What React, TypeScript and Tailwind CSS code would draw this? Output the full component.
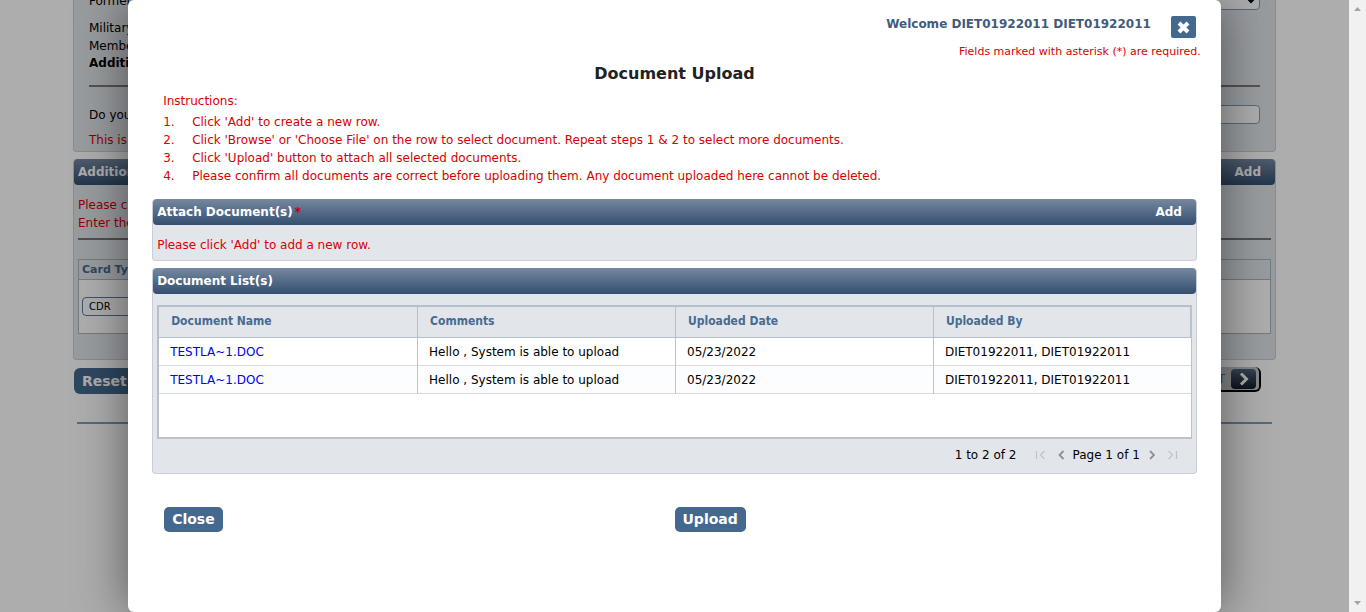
import type { ReactNode } from "react";

const documents = [
  { id: 1, name: "TESTLA~1.DOC", comments: "Hello , System is able to upload", date: "05/23/2022", by: "DIET01922011, DIET01922011" },
  { id: 2, name: "TESTLA~1.DOC", comments: "Hello , System is able to upload", date: "05/23/2022", by: "DIET01922011, DIET01922011" },
];

const instructions = [
  "Click 'Add' to create a new row.",
  "Click 'Browse' or 'Choose File' on the row to select document. Repeat steps 1 & 2 to select more documents.",
  "Click 'Upload' button to attach all selected documents.",
  "Please confirm all documents are correct before uploading them. Any document uploaded here cannot be deleted.",
];

function Panel({ title, action, children }: { title: ReactNode; action?: boolean; children: ReactNode }) {
  return (
    <section className="rounded-[4px] border border-t-0 border-[#c9cdd8] bg-[#e2e6eb]">
      <div className="flex h-[26px] items-center justify-between rounded-[4px] bg-linear-to-b from-[#75889f] to-[#354f70] pr-[14px] pl-1 text-[12px] font-bold text-white">
        <h2>{title}</h2>
        {action && <button type="button">Add</button>}
      </div>
      {children}
    </section>
  );
}

function PagerIcon({ label, d, faint }: { label: string; d: string; faint?: boolean }) {
  return (
    <button type="button" aria-label={label} className={faint ? "text-[#bfc3c8]" : "text-[#8b9197]"}>
      <svg width="12" height="12" viewBox="0 0 12 12" fill="none" stroke="currentColor" strokeWidth={faint ? 1.2 : 1.8}>
        <path d={d} />
      </svg>
    </button>
  );
}

function Page() {
  return (
    <main className="mx-[73px] text-[12px] leading-[18px]">
      <section className="h-[152px] rounded-b-[4px] border border-t-0 border-[#c9cdd8] bg-[#e2e6eb] px-[15px]">
        <div className="flex h-[10px] items-end justify-between">
          <label htmlFor="former">Former</label>
          <select id="former" className="h-[20px] w-[200px] rounded-[4px] border border-[#7f9db9] bg-white" />
        </div>
        <p className="mt-[9px]">Military</p>
        <p>Member</p>
        <h3 className="leading-[16px] font-bold">Additional</h3>
        <hr className="mt-[14px] border-t-2 border-[#7b7b7b]" />
        <div className="mt-[18px] flex items-center justify-between">
          <label htmlFor="question">Do you</label>
          <input id="question" className="h-[19px] w-[200px] rounded-[4px] border border-[#7f9db9] bg-white" />
        </div>
        <p className="mt-[7px] text-[#d80000]">This is</p>
      </section>

      <div className="mt-[7px]">
        <Panel title="Additional" action>
          <div className="h-[174px] px-1 pt-[11px]">
            <p className="text-[#d80000]">Please click</p>
            <p className="text-[#d80000]">Enter the</p>
            <hr className="mt-[6px] border-t-2 border-[#7b7378]" />
            <table className="mt-[19px] w-full border border-[#aab4bf]">
              <thead>
                <tr className="h-[20px] border-b border-[#aab4bf]">
                  <th className="pl-[3px] text-left text-[11px] text-[#466b92]">Card Type</th>
                </tr>
              </thead>
              <tbody>
                <tr className="h-[54px] bg-white">
                  <td className="pl-[3px]">
                    <select aria-label="Card Type" className="block h-[19px] w-[120px] appearance-none rounded-[4px] border border-[#5b7d9e] bg-white px-[6px] text-[10px] leading-[16px]">
                      <option>CDR</option>
                    </select>
                  </td>
                </tr>
              </tbody>
            </table>
          </div>
        </Panel>
      </div>

      <div className="mt-[8px] flex items-start justify-between pr-[15px] pl-px">
        <button type="button" className="h-[26px] rounded-[6px] bg-[#44698e] px-2 text-[14px] font-bold text-white">Reset</button>
        <button type="button" className="-mt-px flex h-[25px] items-center gap-[6px] rounded-[6px] border-r-2 border-b-2 border-black bg-[#c3c6cb] pr-[3px] pl-2 text-[#44698e]">
          NEXT
          <span className="flex h-[20px] w-[25px] items-center justify-center rounded-[4px] bg-linear-to-b from-[#52667f] to-[#131c28]">
            <svg width="12" height="14" viewBox="0 0 12 14" fill="none" stroke="#fff" strokeWidth="3"><path d="M3 1.5 8.5 7 3 12.5" /></svg>
          </span>
        </button>
      </div>
      <hr className="mx-1 mt-[28px] border-t-2 border-[#7d9db8]" />
    </main>
  );
}

function DocumentUpload() {
  return (
    <div role="dialog" aria-labelledby="dialog-title" className="flex min-h-full w-[81%] flex-col rounded-[6px] bg-white px-6 shadow-[0_0_50px_rgba(0,0,0,0.5)]">
      <header className="flex items-start justify-end pt-[15px] pr-px">
        <p className="mr-[20px] text-[12px] leading-[18px] font-bold text-[#3f5b7d]">Welcome DIET01922011 DIET01922011</p>
        <button type="button" aria-label="Close dialog" className="mt-px flex h-[22px] w-[25px] items-center justify-center rounded-[2px] bg-[#44698e]">
          <svg width="13" height="13" viewBox="0 0 13 13" stroke="#fff" strokeWidth="4"><path d="M2 2l9 9M11 2l-9 9" /></svg>
        </button>
      </header>
      <p className="-mr-1 mt-[5px] text-right text-[11px] leading-[18px] text-[#d80000]">Fields marked with asterisk (*) are required.</p>
      <h1 id="dialog-title" className="mt-[3px] text-center text-[16px] leading-[20px] font-bold text-[#222]">Document Upload</h1>

      <div className="mt-[8px] pl-[11px] text-[12px] leading-[18px] text-[#d80000]">
        <p>Instructions:</p>
        <ol className="mt-[3px]">
          {instructions.map((text, i) => (
            <li key={text} className="flex"><span className="w-[29px]">{i + 1}.</span>{text}</li>
          ))}
        </ol>
      </div>

      <div className="mt-[14px] flex flex-col gap-[7px]">
        <Panel title={<>Attach Document(s)<span className="ml-[2px] text-[#c00000]">*</span></>} action>
          <p className="px-1 pt-[11px] pb-[6px] text-[12px] leading-[18px] text-[#d80000]">Please click 'Add' to add a new row.</p>
        </Panel>
        <Panel title="Document List(s)">
          <div className="px-1 pt-[11px]">
            <div className="h-[134px] border-t-2 border-r border-b-2 border-l-2 border-t-[#b5c0cb] border-r-[#bdc3c7] border-b-[#bdc3c7] border-l-[#b5c0cb] bg-white">
              <table className="w-full table-fixed border-separate border-spacing-0 text-[12px] leading-[16px]">
                <thead className="text-left text-[12px] text-[#466b92] [font-family:'DejaVu_Sans_Condensed','DejaVu_Sans',sans-serif]">
                  <tr className="h-[31px] bg-[#e2e6eb]">
                    {["Document Name", "Comments", "Uploaded Date", "Uploaded By"].map((name) => (
                      <th key={name} className="border-b border-l border-[#b5c0cb] pb-[2px] pl-3 font-bold first:border-l-0 last:border-r">{name}</th>
                    ))}
                  </tr>
                </thead>
                <tbody>
                  {documents.map((doc) => (
                    <tr key={doc.id} className="h-[28px] odd:bg-white even:bg-[#fcfdfe] [&>td]:border-b [&>td]:border-l [&>td]:border-b-[#d9dcde] [&>td]:border-l-[#bdc3c7] [&>td]:pl-[11px] [&>td:first-child]:border-l-0">
                      <td><a href="#document" className="text-[#0000ee]">{doc.name}</a></td>
                      <td>{doc.comments}</td>
                      <td>{doc.date}</td>
                      <td>{doc.by}</td>
                    </tr>
                  ))}
                </tbody>
              </table>
            </div>
          </div>
          <div className="flex h-[34px] items-center justify-end pr-[18px] pb-[3px] text-[12px]">
            <span className="mr-[18px]">1 to 2 of 2</span>
            <PagerIcon label="First page" d="M1.5 2v8M9.500 2l-4 4 4 4" faint />
            <span className="ml-[8px] flex"><PagerIcon label="Previous page" d="M8.500 2l-4 4 4 4" /></span>
            <span className="mx-[6px]">Page 1 of 1</span>
            <PagerIcon label="Next page" d="M4 2l4 4-4 4" />
            <span className="ml-[8px] flex"><PagerIcon label="Last page" d="M2.500 2l4 4-4 4M10.500 2v8" faint /></span>
          </div>
        </Panel>
      </div>

      <div className="mt-[33px] grid grid-cols-2 text-[14px] leading-[25px] font-bold text-white">
        <button type="button" className="ml-3 w-fit rounded-[5px] bg-[#44698e] px-2">Close</button>
        <button type="button" className="w-fit rounded-[5px] bg-[#44698e] px-2">Upload</button>
      </div>
    </div>
  );
}

export default function App() {
  return (
    <div className="flex h-screen bg-white text-black [font-family:'DejaVu_Sans',sans-serif]">
      <div className="relative min-w-0 flex-1 overflow-hidden">
        <Page />
        <div className="absolute inset-0 flex justify-center bg-black/32">
          <DocumentUpload />
        </div>
      </div>
      <div className="flex w-[17px] flex-col items-center justify-between bg-[#f1f1f1] py-[7px]" aria-hidden="true">
        <svg width="7" height="4" viewBox="0 0 7 4" fill="#a3a3a3"><path d="M0 4 3.500 0 7 4z" /></svg>
        <svg width="7" height="4" viewBox="0 0 7 4" fill="#a3a3a3"><path d="M0 0 3.500 4 7 0z" /></svg>
      </div>
    </div>
  );
}
